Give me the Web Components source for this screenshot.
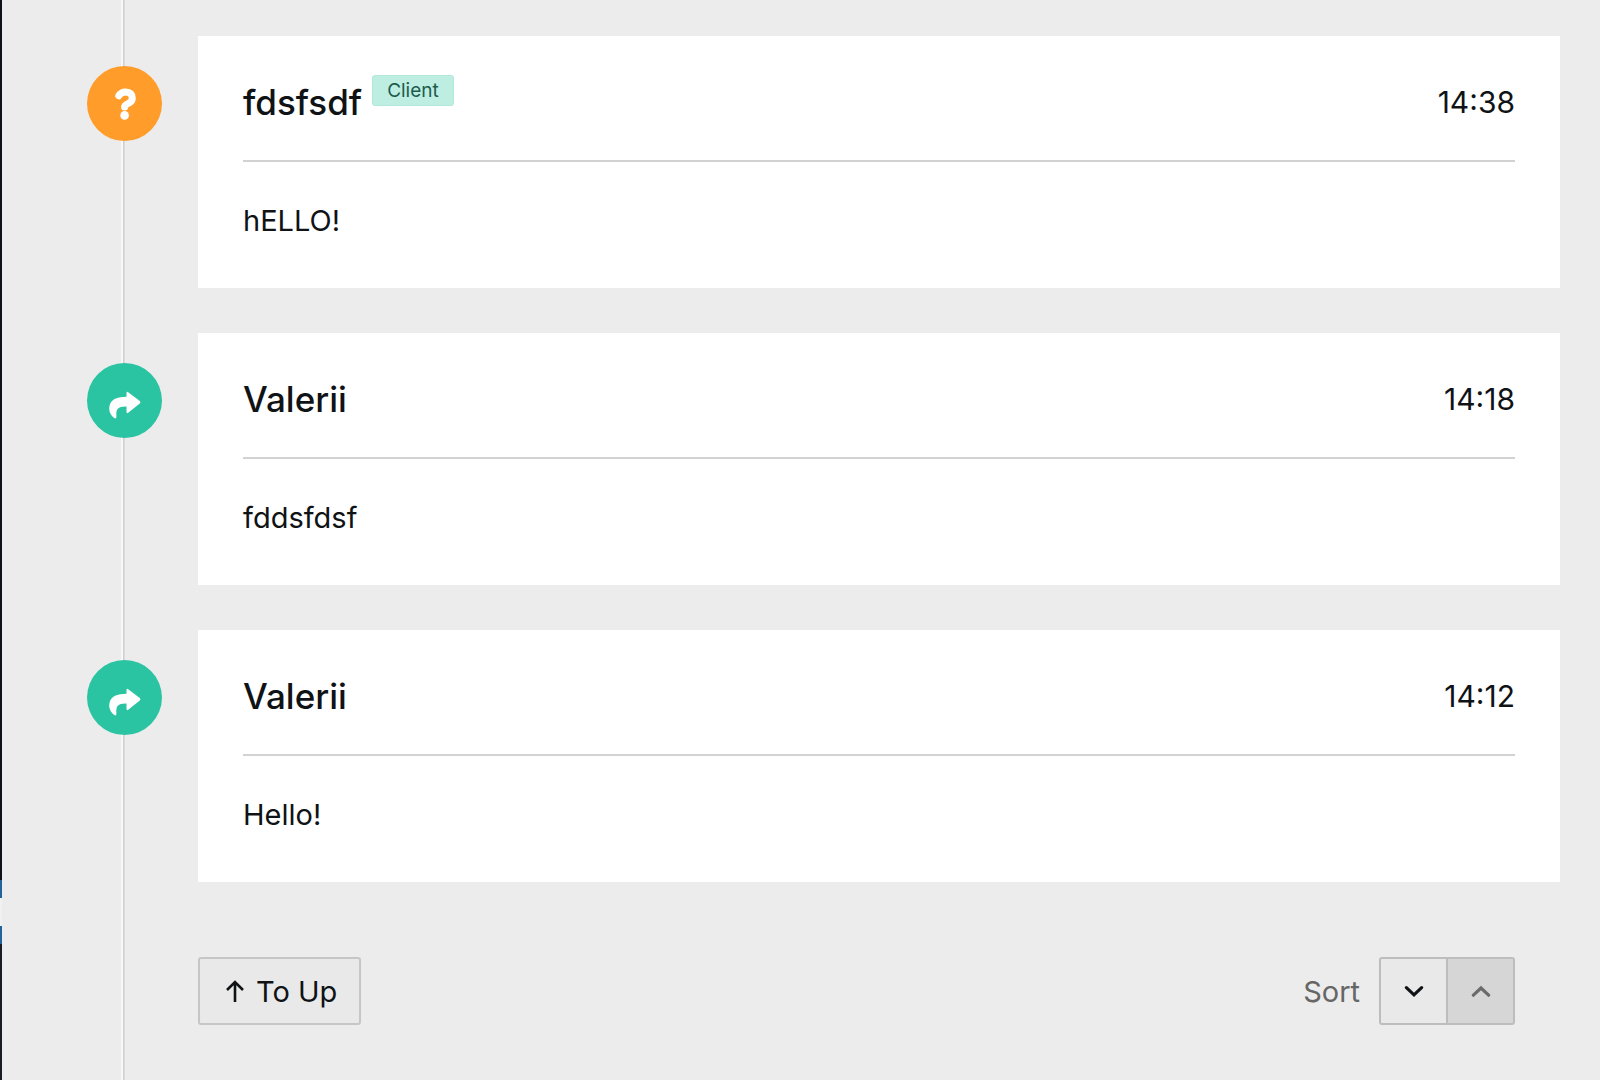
<!DOCTYPE html>
<html lang="en">
<head>
<meta charset="utf-8">
<title>Ticket conversation</title>
<style>
  html, body { margin: 0; min-height: 100%; background: #ececec; }
  body { font-family: Inter, "Open Sans", sans-serif; font-size: 29px; color: #101316; }
</style>
</head>
<body>
<ticket-page>
  <ticket-message kind="question" author="fdsfsdf" role-label="Client" time="14:38">hELLO!</ticket-message>
  <ticket-message kind="reply" author="Valerii" time="14:18">fddsfdsf</ticket-message>
  <ticket-message kind="reply" author="Valerii" time="14:12">Hello!</ticket-message>
  <ticket-toolbar slot="footer"></ticket-toolbar>
</ticket-page>
<script>
class MenuEdge extends HTMLElement {
  constructor() {
    super();
    this.attachShadow({ mode: "open" }).innerHTML = `
      <style>
        :host { display: block; flex: none; width: 2px; background:
          linear-gradient(#0e1116 0 880px, #22639a 880px 898px, #f0f0f0 898px 926px, #22639a 926px 944px, #1a1c24 944px); }
      </style>`;
  }
}
customElements.define("menu-edge", MenuEdge);

class TicketPage extends HTMLElement {
  constructor() {
    super();
    this.attachShadow({ mode: "open" }).innerHTML = `
      <style>
        :host { display: flex; min-height: 100vh; }
        main {
          flex: 1; min-width: 0; box-sizing: border-box; padding: 36px 40px 0 85px;
          display: flex; flex-direction: column;
          background: linear-gradient(90deg, #ececec 119px, #f8f8f8 119px 121px, #d0d0d0 121px 122px, #dcdcdc 122px 123px, #ececec 123px);
        }
        .thread { display: flex; flex-direction: column; gap: 45px; }
      </style>
      <menu-edge></menu-edge>
      <main>
        <div class="thread"><slot></slot></div>
        <slot name="footer"></slot>
      </main>`;
  }
}
customElements.define("ticket-page", TicketPage);

class MessageMarker extends HTMLElement {
  connectedCallback() {
    const question = `<path d="M13.8 8.8 Q16 5 20.6 5 Q27.3 5.3 27.3 11.2 Q27.3 14.6 23.4 16.4 Q19.6 18.2 19.6 20" fill="none" stroke="#fff" stroke-width="7" stroke-linecap="round" stroke-linejoin="round"/><circle cx="19.6" cy="28.4" r="4.3" fill="#fff"/>`;
    const reply = `<path d="M21.5 9 Q21.7 7.2 23.2 8.2 L34.8 17 Q36.2 18.2 34.8 19.4 L23.2 28.8 Q21.7 29.8 21.5 28 V22.6 C13 22.4 10.8 25 11.4 32.6 Q11.4 35.6 9 33.8 C4.6 30.4 3.6 25.4 4.6 21.4 C6.2 15.4 12 12.7 21.5 12.7 Z" fill="#fff"/>`;
    const isQuestion = this.getAttribute("kind") === "question";
    this.attachShadow({ mode: "open" }).innerHTML = `
      <style>
        :host { display: flex; flex: none; align-items: center; justify-content: center;
          width: 75px; height: 75px; border-radius: 50%; background: ${isQuestion ? "#ff9c2a" : "#2bc4a2"}; }
        svg { display: block; width: 40px; height: 34px; overflow: visible; }
      </style>
      <svg viewBox="0 0 40 34" aria-hidden="true">${isQuestion ? question : reply}</svg>`;
  }
}
customElements.define("message-marker", MessageMarker);

class TicketMessage extends HTMLElement {
  constructor() {
    super();
    const badge = this.getAttribute("role-label");
    this.attachShadow({ mode: "open" }).innerHTML = `
      <style>
        :host { display: flex; align-items: flex-start; gap: 36px; }
        message-marker { margin-top: 30px; }
        article { flex: 1; min-width: 0; box-sizing: border-box; min-height: 252px; padding: 0 45px; background: #fff; }
        header { display: flex; align-items: center; height: 126px; padding-top: 8px; box-sizing: border-box; border-bottom: 2px solid #d2d2d2; }
        h2 { margin: 0; font-size: 35px; line-height: 44px; font-weight: 500; }
        .badge { align-self: flex-start; margin: 31px 0 0 10px; padding: 0 14px; box-sizing: border-box; height: 31px; border: 1px solid #b0e8d9; border-radius: 3px;
          background: #beeee2; color: #1d5c4d; font-size: 19px; line-height: 29px; }
        time { margin-left: auto; font-size: 30px; line-height: 36px; }
        p { margin: 0; padding: 39px 0; line-height: 40px; }
      </style>
      <message-marker kind="${this.getAttribute("kind")}"></message-marker>
      <article>
        <header>
          <h2>${this.getAttribute("author")}</h2>
          ${badge ? `<span class="badge">${badge}</span>` : ""}
          <time>${this.getAttribute("time")}</time>
        </header>
        <p><slot></slot></p>
      </article>`;
  }
}
customElements.define("ticket-message", TicketMessage);

class TicketToolbar extends HTMLElement {
  constructor() {
    super();
    this.attachShadow({ mode: "open" }).innerHTML = `
      <style>
        :host { display: flex; align-items: center; justify-content: space-between; padding: 75px 45px 0 111px; }
        button { box-sizing: border-box; height: 68px; margin: 0; border: 2px solid #c6c6c6; background: #e9e9e9;
          color: inherit; font: inherit; display: flex; align-items: center; justify-content: center; }
        svg { display: block; fill: none; stroke: currentColor; }
        .up { gap: 11px; padding: 0 22px 0 25px; border-radius: 3px; }
        .sort { display: flex; align-items: center; }
        .label { margin-right: 19px; color: #666; }
        .sort button { width: 69px; padding: 0; border-color: #bdbdbd; }
        .desc { border-radius: 3px 0 0 3px; }
        .sort .asc { margin-left: -2px; border-radius: 0 3px 3px 0; background: #d6d6d6; color: #6b6b6b; }
      </style>
      <button class="up" type="button">
        <svg width="20" height="24" viewBox="0 0 20 24" stroke-width="2.6" aria-hidden="true"><path d="M10 23 V3 M2 11 L10 3 L18 11"/></svg>
        <span>To Up</span>
      </button>
      <div class="sort" role="group" aria-labelledby="sort-label">
        <span class="label" id="sort-label">Sort</span>
        <button class="desc" type="button" aria-label="Descending">
          <svg width="20" height="12" viewBox="0 0 20 12" stroke-width="3.2" stroke-linecap="round"><path d="M2.4 2.6 L10 9.8 L17.6 2.6"/></svg>
        </button>
        <button class="asc" type="button" aria-label="Ascending" aria-pressed="true">
          <svg width="20" height="12" viewBox="0 0 20 12" stroke-width="3.2" stroke-linecap="round"><path d="M2.4 10.2 L10 3 L17.6 10.2"/></svg>
        </button>
      </div>`;
  }
}
customElements.define("ticket-toolbar", TicketToolbar);
</script>
</body>
</html>
